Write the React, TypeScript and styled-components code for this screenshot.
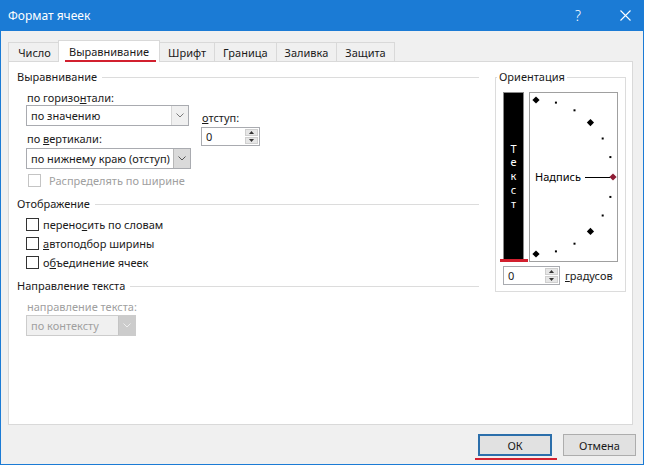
import React from 'react'
import styled, { createGlobalStyle, css } from 'styled-components'

const colors = {
  accent: '#1b7bd5',
  dialog: '#f0f0f0',
  panelLine: '#d9d9d9',
  groupLine: '#dcdcdc',
  field: '#a9abb0',
  text: '#1a1a1a',
  muted: '#a0a0a0',
  mark: '#d2202f',
  diamondRed: '#8e1c34',
}

const GlobalStyle = createGlobalStyle`
  html, body {
    margin: 0;
    padding: 0;
    background: #fff;
  }
  body {
    font-family: "Noto Sans", "Segoe UI", sans-serif;
    font-size: 11px;
    color: ${colors.text};
  }
`

const Window = styled.div`
  width: 644px;
  height: 465px;
  box-sizing: border-box;
  border: 1px solid ${colors.accent};
  border-top: 0;
  background: ${colors.dialog};
  display: flex;
  flex-direction: column;
`

const TitleBar = styled.div`
  height: 31px;
  flex: none;
  background: ${colors.accent};
  color: #fff;
  display: flex;
  align-items: center;
  padding: 0 12px 0 7px;
`

const Title = styled.div`
  flex: 1;
  font-size: 12px;
`

const HelpButton = styled.span`
  width: 14px;
  text-align: center;
  font-size: 14px;
  font-weight: 300;
  margin-right: 35px;
`

const Body = styled.div`
  flex: 1;
  display: flex;
  flex-direction: column;
  padding: 9px 10px 0 7px;
`

const TabStrip = styled.div`
  height: 21px;
  display: flex;
  align-items: flex-end;
  position: relative;
  z-index: 1;
`

const markLine = css`
  content: '';
  position: absolute;
  height: 2px;
  background: ${colors.mark};
`

const Tab = styled.div<{ $active?: boolean }>`
  height: 19px;
  min-width: 53px;
  box-sizing: border-box;
  border: 1px solid ${colors.panelLine};
  border-bottom: 0;
  margin-right: -1px;
  padding: 0 8px;
  display: flex;
  align-items: center;
  justify-content: center;
  background: ${colors.dialog};
  position: relative;
  ${(p) =>
    p.$active &&
    css`
      height: 22px;
      background: #fff;
      margin: 0 -1px -1px -2px;
      padding: 0 10px;
      z-index: 2;
      &::after {
        ${markLine};
        left: 6px;
        right: 3px;
        top: 19px;
      }
    `}
`

const Panel = styled.div`
  height: 364px;
  box-sizing: border-box;
  background: #fff;
  border: 1px solid ${colors.panelLine};
  display: flex;
  gap: 16px;
  padding: 8px 6px 0 8px;
`

const LeftColumn = styled.div`
  flex: 1;
  display: flex;
  flex-direction: column;
`

const GroupHeader = styled.div<{ $gap?: number }>`
  display: flex;
  align-items: center;
  gap: 5px;
  line-height: 14px;
  margin-top: ${(p) => p.$gap ?? 0}px;
  &::after {
    content: '';
    flex: 1;
    border-top: 1px solid ${colors.groupLine};
  }
`

const Indent = styled.div`
  padding-left: 9px;
  display: flex;
  flex-direction: column;
`

const FieldRow = styled.div`
  display: flex;
  gap: 10px;
  margin-top: 7px;
`

const FieldColumn = styled.div<{ $top?: number }>`
  display: flex;
  flex-direction: column;
  padding-top: ${(p) => p.$top ?? 0}px;
`

const FieldLabel = styled.div<{ $gap?: number; $disabled?: boolean }>`
  line-height: 14px;
  padding-left: 1px;
  margin-top: ${(p) => p.$gap ?? 0}px;
  color: ${(p) => (p.$disabled ? colors.muted : colors.text)};
`

const Select = styled.div<{ $width: number; $gap?: number; $disabled?: boolean }>`
  width: ${(p) => p.$width}px;
  height: 21px;
  box-sizing: border-box;
  margin-top: ${(p) => p.$gap ?? 0}px;
  border: 1px solid ${(p) => (p.$disabled ? '#cccccc' : colors.field)};
  background: ${(p) => (p.$disabled ? '#f0f0f0' : '#fff')};
  color: ${(p) => (p.$disabled ? colors.muted : colors.text)};
  display: flex;
  align-items: center;
`

const SelectValue = styled.div`
  flex: 1;
  padding-left: 4px;
  white-space: nowrap;
`

const SelectArrow = styled.div<{ $tone: string; $edge: string }>`
  width: 16px;
  align-self: stretch;
  background: ${(p) => p.$tone};
  border-left: 1px solid ${(p) => p.$edge};
  display: flex;
  align-items: center;
  justify-content: center;
`

const Spinner = styled.div<{ $width: number; $gap?: number }>`
  width: ${(p) => p.$width}px;
  height: 19px;
  box-sizing: border-box;
  margin-top: ${(p) => p.$gap ?? 0}px;
  border: 1px solid ${colors.field};
  background: #fff;
  display: flex;
`

const SpinnerValue = styled.div`
  flex: 1;
  padding-left: 4px;
  display: flex;
  align-items: center;
`

const SpinnerButtons = styled.div`
  width: 13px;
  display: flex;
  flex-direction: column;
  gap: 1px;
  padding: 1px 1px 1px 0;
`

const SpinnerButton = styled.div`
  flex: 1;
  background: #e6e6e6;
  border: 1px solid #cfcfcf;
  display: flex;
  align-items: center;
  justify-content: center;
`

const CheckRow = styled.div<{ $gap?: number; $disabled?: boolean }>`
  display: flex;
  align-items: center;
  gap: ${(p) => (p.$disabled ? 8 : 4)}px;
  height: 14px;
  margin-top: ${(p) => p.$gap ?? 0}px;
  margin-left: ${(p) => (p.$disabled ? 2 : 0)}px;
  color: ${(p) => (p.$disabled ? colors.muted : colors.text)};
`

const CheckBox = styled.span<{ $disabled?: boolean }>`
  width: 13px;
  height: 13px;
  box-sizing: border-box;
  border: 1px solid ${(p) => (p.$disabled ? '#c4c4c4' : '#333')};
  background: #fff;
`

const OrientationGroup = styled.fieldset`
  width: 131px;
  box-sizing: border-box;
  align-self: flex-start;
  margin: 0;
  border: 1px solid ${colors.groupLine};
  padding: 8px 6px 6px 7px;
`

const Legend = styled.legend`
  padding: 0 2px;
  margin-left: -6px;
  line-height: 14px;
`

const OrientRow = styled.div`
  display: flex;
  gap: 5px;
`

const TextStrip = styled.div`
  width: 21px;
  height: 168px;
  box-sizing: border-box;
  background: #000;
  border: 1px solid #8a8a8a;
  color: #fff;
  display: flex;
  flex-direction: column;
  align-items: center;
  justify-content: center;
  position: relative;
  &::after {
    ${markLine};
    height: 3px;
    left: -4px;
    width: 28px;
    top: 166px;
  }
`

const StripLetter = styled.span`
  line-height: 13.75px;
`

const ArcBox = styled.div`
  width: 89px;
  height: 170px;
  box-sizing: border-box;
  border: 1px solid ${colors.muted};
  background: #fff;
  svg {
    display: block;
  }
`

const DegreeRow = styled.div`
  display: flex;
  align-items: center;
  gap: 5px;
  margin-top: 4px;
`

const Footer = styled.div`
  display: flex;
  justify-content: flex-end;
  gap: 11px;
  padding-top: 9px;
  margin-right: -3px;
`

const Button = styled.button<{ $primary?: boolean; $width: number }>`
  width: ${(p) => p.$width}px;
  height: 22px;
  box-sizing: border-box;
  background: #e1e1e1;
  border: 1px solid #adadad;
  font: inherit;
  color: ${colors.text};
  padding: 0;
  position: relative;
  ${(p) =>
    p.$primary &&
    css`
      border: 2px solid #2c6fab;
      &::after {
        ${markLine};
        left: -5px;
        right: -7px;
        top: 22px;
      }
    `}
`

const Chevron = ({ color }: { color: string }) => (
  <svg width="8" height="5" viewBox="0 0 8 5">
    <path d="M0.5 0.5 L4 4 L7.5 0.5" fill="none" stroke={color} strokeWidth="1" />
  </svg>
)

const Triangle = ({ up }: { up?: boolean }) => (
  <svg width="5" height="3" viewBox="0 0 5 3">
    <path d={up ? 'M0 3 L2.5 0 L5 3 Z' : 'M0 0 L2.5 3 L5 0 Z'} fill="#333" />
  </svg>
)

const Close = () => (
  <svg width="11" height="11" viewBox="0 0 11 11">
    <path d="M0.5 0.5 L10.5 10.5 M10.5 0.5 L0.5 10.5" stroke="#fff" strokeWidth="1.1" />
  </svg>
)

const NumberBox = ({ width, gap }: { width: number; gap?: number }) => (
  <Spinner $width={width} $gap={gap}>
    <SpinnerValue>0</SpinnerValue>
    <SpinnerButtons>
      <SpinnerButton>
        <Triangle up />
      </SpinnerButton>
      <SpinnerButton>
        <Triangle />
      </SpinnerButton>
    </SpinnerButtons>
  </Spinner>
)

// dial: centre at (6, 84), radius 77, one mark every 15 degrees
const Dial = () => {
  const cx = 6
  const cy = 84
  const r = 77
  const marks = []
  for (let a = -90; a <= 90; a += 15) {
    const rad = (a * Math.PI) / 180
    const x = cx + r * Math.cos(rad)
    const y = cy - r * Math.sin(rad)
    if (a % 45 === 0) {
      const s = 3.6
      marks.push(
        <polygon
          key={a}
          points={`${x},${y - s} ${x + s},${y} ${x},${y + s} ${x - s},${y}`}
          fill={a === 0 ? colors.diamondRed : '#000'}
        />
      )
    } else {
      marks.push(<rect key={a} x={x - 1} y={y - 1} width="2" height="2" fill="#000" />)
    }
  }
  return (
    <svg width="87" height="168" viewBox="0 0 87 168">
      {marks}
      <text
        x="5"
        y="88"
        fontSize="11"
        fontFamily='"Noto Sans", "Segoe UI", sans-serif'
        fill="#000"
      >
        Надпись
      </text>
      <line x1="55" y1="84.5" x2="80" y2="84.5" stroke="#000" strokeWidth="1" />
    </svg>
  )
}

const tabs = ['Число', 'Выравнивание', 'Шрифт', 'Граница', 'Заливка', 'Защита']

const App: React.FC = () => {
  return (
    <>
      <GlobalStyle />
      <Window>
        <TitleBar>
          <Title>Формат ячеек</Title>
          <HelpButton>?</HelpButton>
          <Close />
        </TitleBar>
        <Body>
          <TabStrip>
            {tabs.map((t) => (
              <Tab key={t} $active={t === 'Выравнивание'}>
                {t}
              </Tab>
            ))}
          </TabStrip>
          <Panel>
            <LeftColumn>
              <GroupHeader>Выравнивание</GroupHeader>
              <Indent>
                <FieldRow>
                  <FieldColumn>
                    <FieldLabel>
                      по горизо<u>н</u>тали:
                    </FieldLabel>
                    <Select $width={163}>
                      <SelectValue>по значению</SelectValue>
                      <SelectArrow $tone="#f0f0f0" $edge="#d6d6d6">
                        <Chevron color="#7a7a7a" />
                      </SelectArrow>
                    </Select>
                    <FieldLabel $gap={6}>
                      по <u>в</u>ертикали:
                    </FieldLabel>
                    <Select $width={165} $gap={2}>
                      <SelectValue>по нижнему краю (отступ)</SelectValue>
                      <SelectArrow $tone="#dadada" $edge="#b8b8b8">
                        <Chevron color="#555" />
                      </SelectArrow>
                    </Select>
                    <CheckRow $gap={4} $disabled>
                      <CheckBox $disabled />
                      Распределять по ширине
                    </CheckRow>
                  </FieldColumn>
                  <FieldColumn $top={20}>
                    <FieldLabel>
                      <u>о</u>тступ:
                    </FieldLabel>
                    <NumberBox width={59} gap={2} />
                  </FieldColumn>
                </FieldRow>
              </Indent>

              <GroupHeader $gap={10}>Отображение</GroupHeader>
              <Indent>
                <CheckRow $gap={6}>
                  <CheckBox />
                  <span>
                    перено<u>с</u>ить по словам
                  </span>
                </CheckRow>
                <CheckRow $gap={5}>
                  <CheckBox />
                  <span>
                    <u>а</u>втоподбор ширины
                  </span>
                </CheckRow>
                <CheckRow $gap={5}>
                  <CheckBox />
                  <span>
                    о<u>б</u>ъединение ячеек
                  </span>
                </CheckRow>
              </Indent>

              <GroupHeader $gap={10}>Направление текста</GroupHeader>
              <Indent>
                <FieldLabel $gap={7} $disabled>
                  направление текста:
                </FieldLabel>
                <Select $width={110} $gap={1} $disabled>
                  <SelectValue>по контексту</SelectValue>
                  <SelectArrow $tone="#cccccc" $edge="#c4c4c4">
                    <Chevron color="#eee" />
                  </SelectArrow>
                </Select>
              </Indent>
            </LeftColumn>

            <OrientationGroup>
              <Legend>Ориентация</Legend>
              <OrientRow>
                <TextStrip>
                  {'Текст'.split('').map((ch, i) => (
                    <StripLetter key={i}>{ch}</StripLetter>
                  ))}
                </TextStrip>
                <ArcBox>
                  <Dial />
                </ArcBox>
              </OrientRow>
              <DegreeRow>
                <NumberBox width={57} />
                <span>
                  <u>г</u>радусов
                </span>
              </DegreeRow>
            </OrientationGroup>
          </Panel>
          <Footer>
            <Button $primary $width={74}>
              ОК
            </Button>
            <Button $width={73}>Отмена</Button>
          </Footer>
        </Body>
      </Window>
    </>
  )
}

export default App
